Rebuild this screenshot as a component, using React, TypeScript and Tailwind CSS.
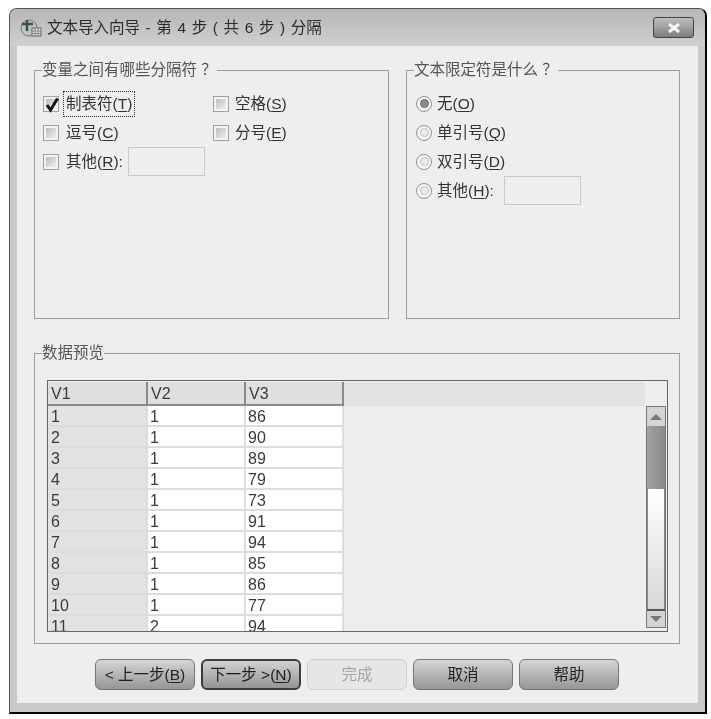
import type { ReactNode } from "react";

const rows = [
  ["1", "1", "86"],
  ["2", "1", "90"],
  ["3", "1", "89"],
  ["4", "1", "79"],
  ["5", "1", "73"],
  ["6", "1", "91"],
  ["7", "1", "94"],
  ["8", "1", "85"],
  ["9", "1", "86"],
  ["10", "1", "77"],
  ["11", "2", "94"],
];

function Key({ children }: { children: string }) {
  return (
    <>
      (<span className="underline underline-offset-2">{children}</span>)
    </>
  );
}

function Check({ checked = false }: { checked?: boolean }) {
  return (
    <span className="relative flex h-[16px] w-[16px] shrink-0 items-center justify-center border border-[#a0a0a0] bg-[#f4f4f4] p-[2px]">
      <span className="h-full w-full bg-gradient-to-br from-[#bdbdbd] to-[#efefef]" />
      {checked && (
        <svg viewBox="0 0 16 16" className="absolute left-0 top-0 h-[16px] w-[16px]">
          <path d="M3 8 L6.5 13 L13.5 1.5" fill="none" stroke="#141414" strokeWidth="3" />
        </svg>
      )}
    </span>
  );
}

function Radio({ checked = false }: { checked?: boolean }) {
  return (
    <span className="flex h-[16px] w-[16px] shrink-0 items-center justify-center rounded-full border border-[#8f8f8f] bg-[#f8f8f8]">
      <span
        className={
          checked
            ? "h-[9px] w-[9px] rounded-full border border-[#6a6a6a] bg-[#8a8a8a]"
            : "h-[9px] w-[9px] rounded-full border border-[#bdbdbd] bg-[#ececec]"
        }
      />
    </span>
  );
}

function Field() {
  return <span className="block h-[29px] w-[77px] border border-[#c9c9c9] bg-[#eeeeee]" />;
}

function Group({ title, className, children }: { title: string; className: string; children: ReactNode }) {
  return (
    <fieldset className={`border border-[#9d9d9d] ${className}`}>
      <legend className="ml-[7px] h-[20px] leading-[20px] text-[#555]">{title}</legend>
      {children}
    </fieldset>
  );
}

function Button({ children, primary, disabled }: { children: ReactNode; primary?: boolean; disabled?: boolean }) {
  let tone = "border border-[#767676] bg-gradient-to-b from-[#d6d6d6] to-[#969696] text-[#222]";
  if (primary) tone = "border-2 border-[#3c3c3c] bg-gradient-to-b from-[#d2d2d2] to-[#949494] text-[#1c1c1c]";
  if (disabled) tone = "border border-[#cfcfcf] bg-[#e6e6e6] text-[#a6a6a6]";
  return (
    <div className={`flex h-[31px] w-[100px] items-center justify-center rounded-[6px] ${tone}`}>{children}</div>
  );
}

export default function App() {
  return (
    <div
      className="min-h-[719px] bg-white pl-[9px] pt-[8px] text-[15.5px] text-[#333]"
      style={{ fontFamily: '"Liberation Sans", "Noto Sans CJK SC", sans-serif' }}
    >
      <div className="flex h-[706px] w-[698px] flex-col overflow-hidden rounded-t-[8px] border border-b-[2px] border-r-[2px] border-[#555] border-b-black border-r-black bg-[#c9c9c9] blur-[0.5px]">
        <div className="flex h-[37px] shrink-0 items-center bg-gradient-to-b from-[#b6b6b6] to-[#d0d0d0] pl-[10px] pr-[11px]">
          <svg viewBox="0 0 22 20" className="h-[20px] w-[22px] shrink-0">
            <circle cx="9" cy="10" r="8" fill="#b9c4c4" stroke="#6f7b7b" />
            <path d="M7 2 V13 M2 6 H13" stroke="#3f4c4c" strokeWidth="2.4" fill="none" />
            <rect x="12" y="10" width="9" height="8" fill="#ddd" stroke="#666" />
            <path d="M12 13 H21 M12 15.5 H21 M15 10 V18 M18 10 V18" stroke="#777" strokeWidth="0.8" />
          </svg>
          <span className="ml-[5px] flex-1 whitespace-nowrap text-[#2c2c2c] [word-spacing:1.3px]">文本导入向导 - 第 4 步 ( 共 6 步 ) 分隔</span>
          <div className="flex h-[21px] w-[41px] items-center justify-center rounded-[3px] border border-[#444] bg-gradient-to-b from-[#bcbcbc] via-[#a0a0a0] to-[#7c7c7c]">
            <svg viewBox="0 0 16 10" className="h-[10px] w-[16px]">
              <path d="M3 1 L13 9 M13 1 L3 9" stroke="#f4f4f4" strokeWidth="3" fill="none" />
            </svg>
          </div>
        </div>

        <div className="mx-[7px] flex h-[657px] flex-col bg-[#eeeeee] px-[17px] pt-[14px]">
          <div className="flex gap-[17px]">
            <Group title="变量之间有哪些分隔符 ？" className="h-[259px] w-[355px]">
              <div className="grid grid-cols-[170px_1fr] px-[8px] pt-[9px]">
                <div className="flex h-[29px] items-center">
                  <Check checked />
                  <span className="ml-[5px] whitespace-nowrap px-[2px] py-[2px] leading-[20px] outline-1 outline-dotted outline-[#333]">
                    制表符<Key>T</Key>
                  </span>
                </div>
                <div className="flex h-[29px] items-center gap-[6px]">
                  <Check />
                  <span>空格<Key>S</Key></span>
                </div>
                <div className="flex h-[29px] items-center gap-[7px]">
                  <Check />
                  <span>逗号<Key>C</Key></span>
                </div>
                <div className="flex h-[29px] items-center gap-[6px]">
                  <Check />
                  <span>分号<Key>E</Key></span>
                </div>
                <div className="col-span-2 flex h-[29px] items-center">
                  <Check />
                  <span className="ml-[7px] mr-[5px]">其他<Key>R</Key>:</span>
                  <Field />
                </div>
              </div>
            </Group>
            <Group title="文本限定符是什么 ？" className="h-[259px] w-[274px]">
              <div className="px-[9px] pt-[9px]">
                {[
                  ["无", "O"],
                  ["单引号", "Q"],
                  ["双引号", "D"],
                ].map(([label, key], index) => (
                  <div key={key} className="flex h-[29px] items-center gap-[5px]">
                    <Radio checked={index === 0} />
                    <span>{label}<Key>{key}</Key></span>
                  </div>
                ))}
                <div className="flex h-[29px] items-center gap-[5px]">
                  <Radio />
                  <span className="mr-[5px]">其他<Key>H</Key>:</span>
                  <Field />
                </div>
              </div>
            </Group>
          </div>

          <Group title="数据预览" className="mt-[24px] h-[301px] w-[646px]">
            <div className="ml-[12px] mt-[17px] flex h-[252px] w-[621px] flex-col border border-[#666] pt-[1px] text-[16px] text-[#3a3a3a]">
              <div className="flex h-[24px] shrink-0">
                {["V1", "V2", "V3"].map((name, index) => (
                  <div
                    key={name}
                    className={`${index === 0 ? "w-[100px]" : "w-[98px]"} border-b-2 border-r-2 border-[#8a8a8a] bg-[#dfdfdf] pl-[3px] leading-[24px]`}
                  >
                    {name}
                  </div>
                ))}
                <div className="w-[301px] bg-[#e2e2e2]" />
              </div>
              <div className="flex min-h-0 flex-1 justify-between pr-[1px]">
                <div className="overflow-hidden">
                  {rows.map((row) => (
                    <div key={row[0]} className="flex h-[21px]">
                      <div className="w-[100px] border-b-2 border-r-2 border-[#dcdcdc] bg-[#e2e2e2] pl-[3px] leading-[21px]">{row[0]}</div>
                      <div className="w-[98px] border-b-2 border-r-2 border-[#dcdcdc] bg-white pl-[2px] leading-[21px]">{row[1]}</div>
                      <div className="w-[98px] border-b-2 border-r-2 border-[#dcdcdc] bg-white pl-[2px] leading-[21px]">{row[2]}</div>
                    </div>
                  ))}
                </div>
                <div className="mb-[3px] flex w-[20px] flex-col border border-[#777]">
                  <div className="flex h-[19px] items-center justify-center bg-[#d4d4d4]">
                    <span className="h-0 w-0 border-x-[6px] border-b-[6px] border-x-transparent border-b-[#777]" />
                  </div>
                  <div className="h-[63px] bg-gradient-to-r from-[#a2a2a2] to-[#8a8a8a]" />
                  <div className="min-h-0 flex-1 border-x border-[#888] bg-gradient-to-b from-white to-[#d8d8d8]" />
                  <div className="flex h-[18px] items-center justify-center border-t-2 border-[#555] bg-[#d4d4d4]">
                    <span className="h-0 w-0 border-x-[6px] border-t-[6px] border-x-transparent border-t-[#777]" />
                  </div>
                </div>
              </div>
            </div>
          </Group>

          <div className="mt-[15px] flex gap-[6px] pl-[61px]">
            <Button>&lt; 上一步(<span className="underline underline-offset-2">B</span>)</Button>
            <Button primary>下一步 &gt;(<span className="underline underline-offset-2">N</span>)</Button>
            <Button disabled>完成</Button>
            <Button>取消</Button>
            <Button>帮助</Button>
          </div>
        </div>
      </div>
    </div>
  );
}
